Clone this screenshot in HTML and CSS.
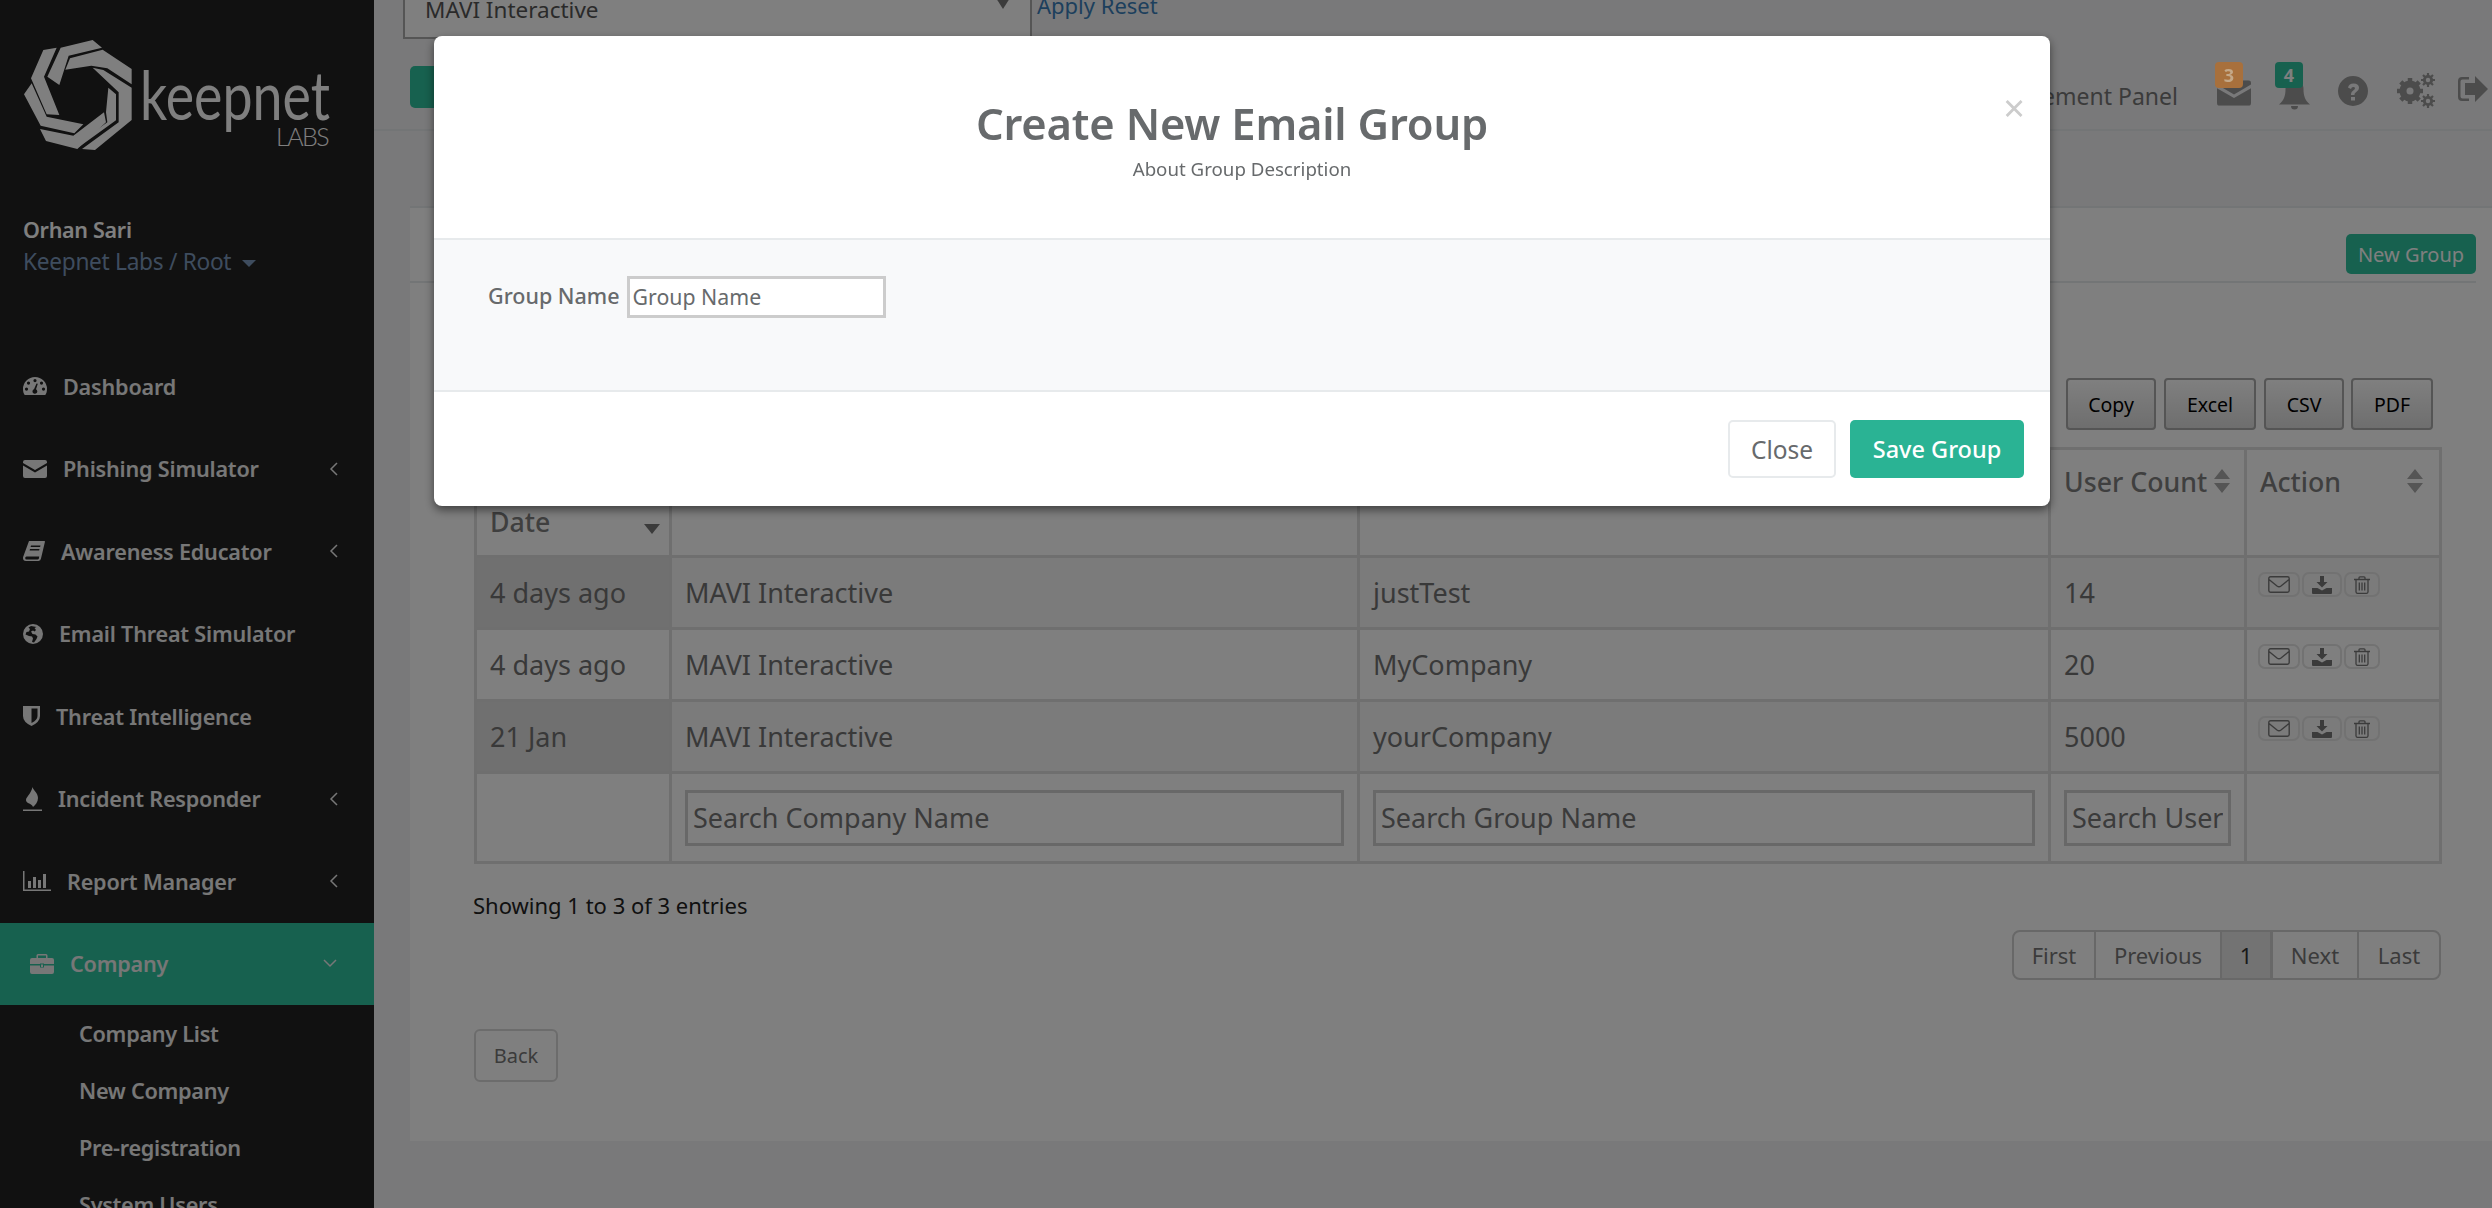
FILE: index.html
```html
<!DOCTYPE html>
<html lang="en">
<head>
<meta charset="utf-8">
<title>Create New Email Group</title>
<link rel="stylesheet" href="styles.css">
</head>
<body>
<svg class="defs" width="0" height="0">
  <defs>
    <symbol id="i-mail" viewBox="0 0 24 18"><path d="M2 0h20a2 2 0 0 1 2 2v1L12 10 0 3V2a2 2 0 0 1 2-2zM0 5.600l12 7 12-7V16a2 2 0 0 1-2 2H2a2 2 0 0 1-2-2z"/></symbol>
    <symbol id="i-mail-o" viewBox="0 0 22 17"><path fill="none" stroke="currentColor" stroke-width="1.400" d="M2.500.8h17a1.700 1.700 0 0 1 1.700 1.700v12a1.700 1.700 0 0 1-1.700 1.700h-17A1.700 1.700 0 0 1 .8 14.500v-12A1.700 1.700 0 0 1 2.500.8zM1 3.500l8 6.500q2 1.500 4 0l8-6.500"/></symbol>
    <symbol id="i-save" viewBox="0 0 20 18"><path d="M8 0h4v6h3.500L10 11.500 4.500 6H8zM0 12h5.500L10 14.500 14.500 12H20v5a1 1 0 0 1-1 1H1a1 1 0 0 1-1-1z"/></symbol>
    <symbol id="i-trash" viewBox="0 0 16 18"><path fill="none" stroke="currentColor" stroke-width="1.300" d="M0 3.500h16M2 3.500V16a1.500 1.500 0 0 0 1.500 1.300h9A1.500 1.500 0 0 0 14 16V3.500M5 3.500V1.800q0-1 1-1h4q1 0 1 1v1.700M5.300 6.500v8M8 6.500v8M10.700 6.500v8"/></symbol>
    <symbol id="i-left" viewBox="0 0 9 14"><path fill="none" stroke="currentColor" stroke-width="1.500" d="M8 1 2 7l6 6"/></symbol>
    <symbol id="i-sort" viewBox="0 0 18 24"><path d="M9 0l8 10H1zM9 24 1 14h16z"/></symbol>
  </defs>
</svg>

<div class="app">
  <aside class="sidebar">
    <div class="logo">
      <svg class="logo-mark" width="120" height="120" viewBox="0 0 360 360" aria-hidden="true">
        <polygon points="70,45 110,38 72,125 118,240 80,238 33,130"/>
        <polygon points="122,38 218,15 246,38 146,62 118,150 82,125"/>
        <polygon points="150,70 248,44 335,102 335,148 262,100 214,92 136,104"/>
        <polygon points="218,98 250,105 335,158 335,255 225,345 186,342 296,262 296,172"/>
        <polygon points="265,158 288,178 288,256 178,335 172,326 262,262 258,232"/>
        <polygon points="12,178 35,145 80,245 190,268 163,295 62,272"/>
        <polygon points="60,282 160,302 252,232 258,262 172,342 78,318"/>
      </svg>
      <div class="logo-text">
        <span class="logo-name">keepnet</span>
        <span class="logo-sub">LABS</span>
      </div>
    </div>
    <div class="profile">
      <div class="profile-name">Orhan Sari</div>
      <div class="profile-org">Keepnet Labs / Root <span class="caret"></span></div>
    </div>
    <nav class="nav">
      <a class="nav-item">
        <svg class="nav-icon" width="24" height="18" viewBox="0 0 24 18"><path fill-rule="evenodd" d="M12 0a12 12 0 0 1 12 12c0 2.500-.6 4.500-1.700 6H1.700C.6 16.500 0 14.500 0 12A12 12 0 0 1 12 0zM12 2a1.600 1.600 0 1 0 0 3.200A1.600 1.600 0 0 0 12 2zM5.500 4.500a1.600 1.600 0 1 0 0 3.200 1.600 1.600 0 0 0 0-3.200zM18.500 4.500a1.600 1.600 0 1 0 0 3.200 1.600 1.600 0 0 0 0-3.200zM3.500 10.500a1.600 1.600 0 1 0 0 3.200 1.600 1.600 0 0 0 0-3.200zM20.500 10.500a1.600 1.600 0 1 0 0 3.200 1.600 1.600 0 0 0 0-3.200zM13.500 6.500 11 12.200a2.400 2.400 0 1 0 2 .1l1.800-5.500z"/></svg>
        <span class="nav-label">Dashboard</span>
      </a>
      <a class="nav-item">
        <svg class="nav-icon" width="24" height="18"><use href="#i-mail"/></svg>
        <span class="nav-label">Phishing Simulator</span>
        <svg class="nav-arrow" width="9" height="14"><use href="#i-left"/></svg>
      </a>
      <a class="nav-item">
        <svg class="nav-icon" width="22" height="20" viewBox="0 0 22 20"><path fill-rule="evenodd" d="M6 0h15.500q.6.300.4 1L18 17.500q-.4 2-2.500 2.500H3q-3 0-3-3 0-.8.300-1.500zM8 4.500l-.4 1.500h9.500l.4-1.500zM7 8l-.4 1.500h9.500l.4-1.500zM3.500 15.500q-1.300 0-1.300 1.500t1.300 1.500h11q1 0 1.400-1l.3-2z"/></svg>
        <span class="nav-label">Awareness Educator</span>
        <svg class="nav-arrow" width="9" height="14"><use href="#i-left"/></svg>
      </a>
      <a class="nav-item">
        <svg class="nav-icon" width="20" height="20" viewBox="0 0 20 20"><path fill-rule="evenodd" d="M10 0a10 10 0 1 1 0 20 10 10 0 0 1 0-20zM8 2 5.500 3.500 7 5 6 7.500 3.500 8 2.500 10.500 6 12l3 .5 1 2-1 3.500 2 .5 2.500-3.500 1-2.500-2-2-3-.5L8 7.500l2-1 1.500 1L13 6l-1.500-2 2-1z"/></svg>
        <span class="nav-label">Email Threat Simulator</span>
      </a>
      <a class="nav-item">
        <svg class="nav-icon" width="17" height="20" viewBox="0 0 17 20"><path fill-rule="evenodd" d="M0 0h17v10q0 6-8.500 10Q0 16 0 10zM8.500 2.500V17q6-3 6-7V2.500z"/></svg>
        <span class="nav-label">Threat Intelligence</span>
      </a>
      <a class="nav-item">
        <svg class="nav-icon" width="19" height="24" viewBox="0 0 19 24"><path d="M9.500 0c.5 3 5.500 6 5.500 11 0 4-2.500 7-5 9-.5-2-2.500-3-5-4-1.500-1-2-2-2-3 0-3 5-6 6.500-13z"/><path d="M0 22.500h19V24H0z"/></svg>
        <span class="nav-label">Incident Responder</span>
        <svg class="nav-arrow" width="9" height="14"><use href="#i-left"/></svg>
      </a>
      <a class="nav-item">
        <svg class="nav-icon" width="28" height="20" viewBox="0 0 28 20"><path d="M0 0h1.500v18.500H28V20H0zM5 10h3v7H5zM10 6h3v11h-3zM15 9h3v8h-3zM20 3h3v14h-3z"/></svg>
        <span class="nav-label">Report Manager</span>
        <svg class="nav-arrow" width="9" height="14"><use href="#i-left"/></svg>
      </a>
      <a class="nav-item is-active">
        <svg class="nav-icon" width="24" height="20" viewBox="0 0 24 20"><path fill-rule="evenodd" d="M8 0h8q1.500 0 1.500 1.500V4H22q2 0 2 2v4H14v-.5h-4v.5H0V6q0-2 2-2h4.500V1.500Q6.500 0 8 0zm0 1.500V4h8V1.500zM0 11.500h10v2h4v-2h10V18q0 2-2 2H2q-2 0-2-2zm11-1h2V13h-2z"/></svg>
        <span class="nav-label">Company</span>
        <svg class="nav-arrow is-down" width="14" height="9" viewBox="0 0 14 9"><path fill="none" stroke="currentColor" stroke-width="1.500" d="M1 1l6 6 6-6"/></svg>
      </a>
      <a class="sub-item">Company List</a>
      <a class="sub-item">New Company</a>
      <a class="sub-item">Pre-registration</a>
      <a class="sub-item">System Users</a>
    </nav>
  </aside>

  <main class="main">
    <div class="filter-bar">
      <div class="company-select">
        <span>MAVI Interactive</span>
        <span class="select-arrow"></span>
      </div>
      <a class="filter-link">Apply Reset</a>
    </div>

    <header class="topbar">
      <button class="btn-top" type="button">Search</button>
      <div class="topbar-right">
        <span class="panel-link">Management Panel</span>
        <span class="top-icon icon-mail">
          <svg width="34" height="26" viewBox="0 0 24 18"><use href="#i-mail"/></svg>
          <span class="badge badge-orange">3</span>
        </span>
        <span class="top-icon icon-bell">
          <svg width="31" height="36" viewBox="0 0 31 36"><path d="M15.500 4c6 0 9 4 9 9 0 6 1 11 6.500 15.500H0C5.500 24 6.500 19 6.500 13c0-5 3-9 9-9zM12 30h7a3.500 3.500 0 0 1-7 0z"/></svg>
          <span class="badge badge-green">4</span>
        </span>
        <svg class="top-glyph" width="30" height="30" viewBox="0 0 30 30"><path fill-rule="evenodd" d="M15 0a15 15 0 1 1 0 30 15 15 0 0 1 0-30zM10 11.500l3 1.500q.5-2 2.200-2 1.800 0 1.800 1.300 0 1-1.500 2-2.500 1.500-2.500 3.700v1h3.500v-.7q0-1 1.500-2 3-1.800 3-4.300 0-4.500-5.500-4.500-4.500 0-5.500 4zM13 21v3.500h4V21z"/></svg>
        <svg class="top-glyph gears" width="38" height="36" viewBox="0 0 38 36"><g><circle cx="13" cy="18" r="8" fill="none" stroke="currentColor" stroke-width="5"/><path stroke="currentColor" stroke-width="4.500" d="M13 5v26M0 18h26M3.800 8.800l18.400 18.400M22.200 8.800 3.800 27.200"/></g><circle cx="13" cy="18" r="3.500" class="gear-hole"/><g><circle cx="31" cy="7" r="3.800" fill="none" stroke="currentColor" stroke-width="2.600"/><path stroke="currentColor" stroke-width="2.200" d="M31 0v14M24 7h14M26 2l10 10M36 2 26 12"/><circle cx="31" cy="7" r="2.200" class="gear-hole"/></g><g><circle cx="31" cy="28" r="3.800" fill="none" stroke="currentColor" stroke-width="2.600"/><path stroke="currentColor" stroke-width="2.200" d="M31 21v14M24 28h14M26 23l10 10M36 23 26 33"/><circle cx="31" cy="28" r="2.200" class="gear-hole"/></g></svg>
        <svg class="top-glyph last" width="31" height="26" viewBox="0 0 31 26"><path d="M12 1H5Q1 1 1 5v16q0 4 4 4h7v-2.500H5.500q-2 0-2-2v-15q0-2 2-2H12z"/><path d="M18 0l13 13-13 13v-7H8V7h10z"/></svg>
      </div>
    </header>

    <section class="card">
      <div class="card-head">
        <h2 class="card-title">Email Groups</h2>
        <button class="btn-new" type="button">New Group</button>
      </div>
      <div class="export-row">
        <button class="btn-export w-copy" type="button">Copy</button>
        <button class="btn-export w-excel" type="button">Excel</button>
        <button class="btn-export w-csv" type="button">CSV</button>
        <button class="btn-export w-pdf" type="button">PDF</button>
      </div>
      <table class="grid">
        <colgroup><col class="c1"><col class="c2"><col class="c3"><col class="c4"><col class="c5"></colgroup>
        <thead>
          <tr>
            <th><span class="th-in">Created<br>Date<svg class="sort-one" width="18" height="10" viewBox="0 0 18 10"><path d="M9 10 1 0h16z"/></svg></span></th>
            <th>Company Name</th>
            <th>Group Name</th>
            <th><span class="th-in th-top">User Count<svg class="sort" width="18" height="24"><use href="#i-sort"/></svg></span></th>
            <th><span class="th-in th-top">Action<svg class="sort" width="18" height="24"><use href="#i-sort"/></svg></span></th>
          </tr>
        </thead>
        <tbody>
          <tr class="odd">
            <td class="sorted">4 days ago</td><td>MAVI Interactive</td><td>justTest</td><td>14</td>
            <td class="actions"><span class="act-row"><span class="act a1"><svg width="22" height="17"><use href="#i-mail-o"/></svg></span><span class="act a2"><svg width="20" height="18"><use href="#i-save"/></svg></span><span class="act a3"><svg width="16" height="18"><use href="#i-trash"/></svg></span></span></td>
          </tr>
          <tr>
            <td>4 days ago</td><td>MAVI Interactive</td><td>MyCompany</td><td>20</td>
            <td class="actions"><span class="act-row"><span class="act a1"><svg width="22" height="17"><use href="#i-mail-o"/></svg></span><span class="act a2"><svg width="20" height="18"><use href="#i-save"/></svg></span><span class="act a3"><svg width="16" height="18"><use href="#i-trash"/></svg></span></span></td>
          </tr>
          <tr class="odd">
            <td class="sorted">21 Jan</td><td>MAVI Interactive</td><td>yourCompany</td><td>5000</td>
            <td class="actions"><span class="act-row"><span class="act a1"><svg width="22" height="17"><use href="#i-mail-o"/></svg></span><span class="act a2"><svg width="20" height="18"><use href="#i-save"/></svg></span><span class="act a3"><svg width="16" height="18"><use href="#i-trash"/></svg></span></span></td>
          </tr>
          <tr class="search-row">
            <td></td>
            <td><input class="search" type="text" placeholder="Search Company Name"></td>
            <td><input class="search" type="text" placeholder="Search Group Name"></td>
            <td><input class="search" type="text" placeholder="Search User Count"></td>
            <td></td>
          </tr>
        </tbody>
      </table>
      <div class="table-info">Showing 1 to 3 of 3 entries</div>
      <div class="pager-row">
        <div class="pager">
          <span class="pg pg-first">First</span>
          <span class="pg pg-prev">Previous</span>
          <span class="pg pg-cur">1</span>
          <span class="pg pg-next">Next</span>
          <span class="pg pg-last">Last</span>
        </div>
      </div>
      <button class="btn-back" type="button">Back</button>
    </section>
  </main>
</div>

<div class="backdrop"></div>

<div class="modal">
  <div class="modal-head">
    <button class="modal-x" type="button">×</button>
    <h1 class="modal-title">Create New Email Group</h1>
    <div class="modal-sub">About Group Description</div>
  </div>
  <div class="modal-body">
    <label class="field-label" for="gname">Group Name</label>
    <input class="field-input" id="gname" type="text" placeholder="Group Name">
  </div>
  <div class="modal-foot">
    <button class="btn-close" type="button">Close</button>
    <button class="btn-save" type="button">Save Group</button>
  </div>
</div>
</body>
</html>
```
FILE: styles.css
```css
* { box-sizing: border-box; }
html, body { margin: 0; height: 1208px; overflow: hidden; }
body { font-family: "Noto Sans", "Liberation Sans", sans-serif; background: #f3f3f4; color: #777; }
.defs { position: absolute; }
button { font-family: inherit; }

.app { display: flex; height: 1208px; overflow: hidden; }

/* sidebar */
.sidebar { width: 374px; flex: none; background: #222; color: #eee; height: 1208px; overflow: hidden; }
.logo { display: flex; padding: 35px 0 0 20px; height: 214px; }
.logo-mark { fill: #fff; flex: none; }
.logo-text { display: flex; flex-direction: column; align-items: flex-start; padding-top: 25px; width: 192px; color: #fff; }
.logo-name { font-family: "Lato", sans-serif; font-weight: 400; font-size: 68px; line-height: 68px; transform: scaleX(.79); transform-origin: left center; }
.logo-sub { font-family: "Lato", sans-serif; font-weight: 300; font-size: 25px; line-height: 20px; letter-spacing: -1.500px; margin: -2px 0 0 136px; }
.profile { padding-left: 23px; height: 131px; }
.profile-name { font-size: 21.500px; line-height: 32px; font-weight: 600; color: #fff; letter-spacing: -.3px; }
.profile-org { font-size: 22.700px; line-height: 32px; color: #7d99bc; letter-spacing: -.3px; display: flex; align-items: center; gap: 11px; }
.caret { width: 0; height: 0; border: 7px solid transparent; border-top-color: #7d99bc; border-bottom: 0; margin-top: 3px; }
.nav { display: flex; flex-direction: column; }
.nav-item { height: 82.500px; display: flex; align-items: center; gap: 16px; padding: 0 36px 0 23px; font-size: 21.600px; font-weight: 600; letter-spacing: -.2px; color: #eee; }
.nav-icon { fill: currentColor; flex: none; }
.nav-label { flex: 1; }
.nav-arrow { flex: none; fill: none; }
.is-active { background: #2fc29e; padding-left: 30px; }
.is-active .nav-arrow { margin-right: 1px; }
.sub-item { height: 57px; display: flex; align-items: center; padding-left: 79px; font-size: 21.700px; font-weight: 600; letter-spacing: -.3px; color: #eee; }

/* main */
.main { flex: 1; min-width: 0; display: flex; flex-direction: column; }
.filter-bar { display: flex; margin: -30px 0 0 29px; height: 69px; flex: none; }
.company-select { width: 629px; height: 69px; border: 2px solid #aaa; background: #fff; display: flex; align-items: center; justify-content: space-between; padding: 9px 20px 0 20px; font-size: 22.500px; color: #555; }
.select-arrow { width: 0; height: 0; border: 7px solid transparent; border-top: 11px solid #777; border-bottom: 0; margin: 0 0 12px; }
.filter-link { margin-left: 5px; color: #3a7fba; font-size: 22px; line-height: 71px; white-space: nowrap; }
.topbar { height: 92px; flex: none; border-bottom: 2px solid #e7eaec; padding: 27px 4px 0 36px; display: flex; justify-content: space-between; }
.btn-top { width: 300px; height: 42px; border: 0; border-radius: 5px; background: #2fc29e; color: #fff; font-size: 20px; }
.topbar-right { display: flex; align-items: flex-start; }
.panel-link { font-size: 23px; color: #777; margin-top: 14px; margin-right: 39px; }
.top-icon { position: relative; display: block; color: #999; }
.top-icon svg { display: block; fill: #999; }
.icon-mail { margin-top: 14px; margin-right: 28px; }
.icon-bell { margin-top: 10px; margin-right: 28px; }
.badge { position: absolute; top: -18px; width: 28px; height: 26px; border-radius: 4px; font-size: 18px; font-weight: 700; display: flex; align-items: center; justify-content: center; color: #fff; }
.icon-bell .badge { top: -14px; left: -4px; }
.icon-mail .badge { left: -2px; }
.badge-orange { background: #a8703c; color: #c4a888; z-index: 2; }
.badge-green { background: #2fc29e; }
.top-glyph { color: #999; fill: #999; flex: none; margin-top: 10px; margin-right: 29px; }
.top-glyph.last { margin-right: 0; }
.gears { margin-top: 7px; margin-right: 22px; }
.gear-hole { fill: #f3f3f4; }

/* card */
.card { margin: 75px 0 0 36px; height: 935px; background: #fff; border-top: 2px solid #e7eaec; padding: 0 16px 0 64px; flex: none; }
.card-head { display: flex; justify-content: space-between; align-items: flex-end; height: 75px; padding-bottom: 7px; margin-left: -64px; border-bottom: 2px solid #e7eaec; }
.card-title { margin: 0 0 0 60px; font-size: 24px; font-weight: 400; color: #777; }
.btn-new { width: 130px; height: 40px; border: 0; border-radius: 5px; background: #2fc29e; color: #fff; font-size: 20px; padding: 0; }
.export-row { display: flex; justify-content: flex-end; gap: 7px; padding: 95px 7px 0 0; height: 164px; margin-right: 36px; }
.btn-export { height: 52px; border: 2px solid #aaa; border-radius: 4px; background: linear-gradient(#fff, #ddd); color: #000; font-size: 19.500px; padding: 0; }
.w-copy { width: 90px; margin-right: 1px; } .w-excel { width: 92px; margin-right: 1px; } .w-csv { width: 80px; } .w-pdf { width: 82px; }

.grid { width: 1965px; table-layout: fixed; border-collapse: collapse; border: 2px solid #dedede; font-size: 27px; color: #737373; }
.c1 { width: 195px; } .c2 { width: 688px; } .c3 { width: 691px; } .c4 { width: 196px; } .c5 { width: 195px; }
.grid th, .grid td { border: 3px solid #dedede; text-align: left; padding: 0 13px; vertical-align: middle; }
.grid th { height: 108px; font-weight: 500; font-size: 26.700px; line-height: 40px; color: #7e7e7e; vertical-align: top; padding-top: 12px; }
.th-in { display: flex; justify-content: space-between; align-items: flex-start; position: relative; }
.th-in svg { flex: none; }
.th-top svg { margin-top: 7px; }
.th-top { white-space: nowrap; }
.grid th:last-child .th-in { padding-right: 2px; }
.sort { fill: #aaa; }
.sort-one { position: absolute; right: -5px; bottom: 8px; fill: #777; }
.grid tbody tr { height: 72px; }
.grid tbody tr.odd td { background: #f6f6f6; }
.grid tbody tr.odd td.sorted { background: #e0e0e0; }
.grid td.actions { vertical-align: top; padding: 14px 0 0 11px; }
.act-row { display: flex; gap: 2px; }
.act { height: 25px; border: 2px solid #e4e4e4; border-radius: 7px; display: flex; align-items: center; justify-content: center; color: #777; flex: none; }
.act svg { fill: currentColor; }
.a1 { width: 42px; } .a2 { width: 40px; } .a3 { width: 36px; }
.grid tbody tr.search-row { height: 90px; }
.search { width: 100%; height: 56px; border: 3px solid #d0d0d0; padding: 0 5px; font-family: inherit; font-size: 27px; background: #fff; }
.search::placeholder { color: #777; opacity: 1; }
.table-info { margin-top: 27px; margin-left: -1px; font-size: 22px; line-height: 28px; color: #222; }
.pager-row { display: flex; margin-top: 11px; margin-left: 1538px; }
.pager { display: flex; height: 50px; border: 2px solid #d0d0d0; border-radius: 8px; color: #777; font-size: 22px; }
.pg { display: flex; align-items: center; justify-content: center; border-right: 2px solid #d0d0d0; }
.pg-first { width: 82px; } .pg-prev { width: 126px; } .pg-cur { width: 51px; background: #e7e7e7; color: #333; border-right-width: 3px; }
.pg-next { width: 86px; } .pg-last { width: 80px; border-right: 0; }
.btn-back { display: block; margin-top: 49px; width: 84px; height: 53px; border: 2px solid #d8d8d8; border-radius: 6px; background: #fff; color: #777; font-size: 20px; padding: 0; }

/* modal */
.backdrop { position: fixed; inset: 0; z-index: 1; background: rgba(0,0,0,.5); }
.modal { position: fixed; z-index: 3; top: 36px; left: 434px; width: 1616px; height: 470px; background: #fff; border-radius: 8px; box-shadow: 0 4px 10px rgba(0,0,0,.5); display: flex; flex-direction: column; }
.modal-head { position: relative; height: 204px; border-bottom: 2px solid #e7eaec; text-align: center; padding-top: 57px; flex: none; }
.modal-x { position: absolute; top: 47px; right: 25px; border: 0; background: none; padding: 0; font-size: 38px; line-height: 48px; color: #ccc; }
.modal-title { margin: 0 0 0 -20px; font-size: 43.500px; line-height: 60px; font-weight: 600; color: #676a6c; letter-spacing: -.2px; }
.modal-sub { font-size: 18.700px; line-height: 24px; margin-top: 4px; color: #676a6c; }
.modal-body { height: 152px; flex: none; background: #f8f9fa; border-bottom: 2px solid #e7eaec; padding: 36px 54px 0; display: flex; align-items: flex-start; gap: 7px; }
.field-label { font-size: 21.500px; font-weight: 500; color: #676a6c; line-height: 40px; }
.field-input { width: 259px; height: 42px; border: 3px solid #ccc; background: #fff; padding: 0 3px 2px; font-family: inherit; font-size: 21.300px; }
.field-input::placeholder { color: #676a6c; opacity: 1; }
.modal-foot { flex: 1; display: flex; justify-content: flex-end; align-items: flex-start; gap: 14px; padding: 28px 26px 0 0; }
.btn-close { width: 108px; height: 58px; border: 2px solid #e7eaec; border-radius: 5px; background: #fff; color: #676a6c; font-size: 24.500px; padding: 0; }
.btn-save { width: 174px; height: 58px; border: 0; border-radius: 5px; background: #2ab394; color: #fff; font-size: 23.500px; font-weight: 500; padding: 0; }
```
